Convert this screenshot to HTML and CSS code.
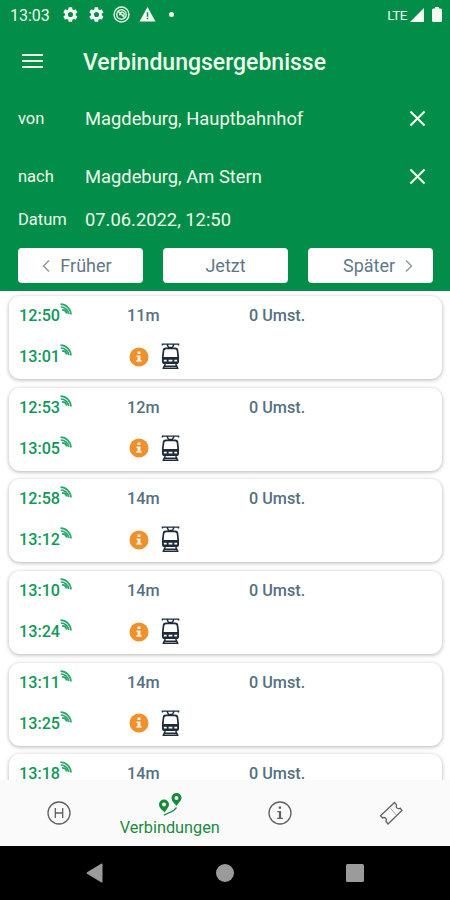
FILE: index.html
```
<!DOCTYPE html>
<html lang="de">
<head>
    <meta charset="utf-8">
    <title>Verbindungsergebnisse</title>
    <link rel="stylesheet" href="styles.css">
</head>
<body>
    <!-- icons used more than once -->
    <svg class="sprite">
        <symbol id="gear" viewBox="0 0 24 24">
            <path fill-rule="evenodd" d="M19.4 13a7.500 7.500 0 0 0 0-2l2.200-1.700a.5.5 0 0 0 .1-.6l-2.200-3.700a.5.5 0 0 0-.6-.2l-2.500 1a7.300 7.300 0 0 0-1.700-1l-.4-2.700a.5.5 0 0 0-.5-.4h-4a.5.5 0 0 0-.5.4l-.4 2.700a7.300 7.300 0 0 0-1.700 1l-2.500-1a.5.5 0 0 0-.6.2L2 8.700a.5.5 0 0 0 .1.600L4.300 11a7.500 7.500 0 0 0 0 2l-2.200 1.700a.5.5 0 0 0-.1.600l2.100 3.700a.5.5 0 0 0 .6.200l2.500-1a7.300 7.300 0 0 0 1.700 1l.4 2.700a.5.5 0 0 0 .5.400h4a.5.5 0 0 0 .5-.4l.4-2.700a7.300 7.300 0 0 0 1.700-1l2.500 1a.5.5 0 0 0 .6-.2l2.100-3.700a.5.5 0 0 0-.1-.6zM12 15.600a3.600 3.600 0 1 1 0-7.200 3.600 3.600 0 0 1 0 7.200z"/>
        </symbol>
        <symbol id="close" viewBox="0 0 18 18">
            <path d="M1.500 1.500l15 15M16.500 1.500l-15 15"/>
        </symbol>
        <symbol id="live" viewBox="0 0 12 12">
            <path d="M.5 1.200C6 1.200 10.600 5.500 11 11.500M.8 4C5 4 8.400 7.300 8.700 11M2 6.800c2.400 0 4.300 1.700 4.600 3.700"/>
        </symbol>
        <symbol id="info" viewBox="0 0 20 20">
            <circle cx="10" cy="10" r="9.500" fill="#ee902c"/>
            <path fill="#fdeedd" d="M8.500 4.600h3v2.500h-3zM7.500 8.400h4v4.800h1.200v1.600H7.300v-1.600h1.200V10h-1z"/>
        </symbol>
        <symbol id="tram" viewBox="0 0 20 28">
            <path fill="none" stroke="#1d2b3a" stroke-width="1.500" d="M1.500 2.300V1h17v1.300M6.500 1.500l1.500 3h4l1.500-3"/>
            <path fill="#1d2b3a" fill-rule="evenodd" d="M5 4.500h10q3 0 3.200 3L19 14v5q0 3-3 3H4q-3 0-3-3v-5l.8-6.500q.2-3 3.200-3zM5.500 6.300q-1.800 0-2 1.700l-.7 6.500h14.400L16.500 8q-.2-1.700-2-1.700zM3 17.300v2h3v-2zM14 17.300v2h3v-2zM8 17.500v1.800h4v-1.800z"/>
            <path fill="none" stroke="#1d2b3a" stroke-width="1.500" d="M4.500 22L2 27M15.500 22l2.500 5M3.500 24.200h13M2.500 26.300h15"/>
        </symbol>
    </svg>

    <div class="screen">
        <header class="header">
            <div class="status">
                <span class="clock">13:03</span>
                <svg class="status-icon"><use href="#gear"/></svg>
                <svg class="status-icon"><use href="#gear"/></svg>
                <svg class="status-icon ring" viewBox="0 0 18 18">
                    <circle cx="9" cy="9" r="7.900"/>
                    <circle cx="9" cy="9" r="5"/>
                    <path d="M5 5l8 8M7.500 9.800a2.300 2.300 0 1 1 3 1"/>
                </svg>
                <svg class="status-icon" viewBox="0 0 18 18">
                    <path fill-rule="evenodd" d="M9 1L17.500 16.500H.5zM8.200 6.500v4.800h1.600V6.500zM8.200 12.500V14h1.600v-1.500z"/>
                </svg>
                <span class="dot"></span>
                <span class="lte">LTE</span>
                <svg class="signal" viewBox="0 0 14 14"><path d="M14 0v14H0z"/></svg>
                <svg class="battery" viewBox="0 0 10 15"><path d="M3 0h4v1.500h1.500Q10 1.500 10 3v10.500q0 1.500-1.500 1.500h-7Q0 15 0 13.500V3q0-1.500 1.500-1.500H3z"/></svg>
            </div>

            <div class="title-row">
                <div class="menu"><i></i><i></i><i></i></div>
                <h1>Verbindungsergebnisse</h1>
            </div>

            <div class="field from">
                <label>von</label>
                <span class="value">Magdeburg, Hauptbahnhof</span>
                <svg class="close"><use href="#close"/></svg>
            </div>
            <div class="field to">
                <label>nach</label>
                <span class="value">Magdeburg, Am Stern</span>
                <svg class="close"><use href="#close"/></svg>
            </div>
            <div class="field date">
                <label>Datum</label>
                <span class="value">07.06.2022, 12:50</span>
            </div>

            <div class="buttons">
                <button class="earlier"><svg class="chevron" viewBox="0 0 8 12"><path d="M7 .5L1.500 6 7 11.500"/></svg><span>Früher</span></button>
                <button><span>Jetzt</span></button>
                <button class="later"><span>Später</span><svg class="chevron" viewBox="0 0 8 12"><path d="M1 .5L6.500 6 1 11.500"/></svg></button>
            </div>
        </header>

        <main class="results">
            <div class="card">
                <div class="time">12:50<svg class="live"><use href="#live"/></svg></div>
                <div class="duration">11m</div>
                <div class="changes">0 Umst.</div>
                <div class="time">13:01<svg class="live"><use href="#live"/></svg></div>
                <div class="lines"><svg class="info"><use href="#info"/></svg><svg class="tram"><use href="#tram"/></svg></div>
            </div>
            <div class="card">
                <div class="time">12:53<svg class="live"><use href="#live"/></svg></div>
                <div class="duration">12m</div>
                <div class="changes">0 Umst.</div>
                <div class="time">13:05<svg class="live"><use href="#live"/></svg></div>
                <div class="lines"><svg class="info"><use href="#info"/></svg><svg class="tram"><use href="#tram"/></svg></div>
            </div>
            <div class="card">
                <div class="time">12:58<svg class="live"><use href="#live"/></svg></div>
                <div class="duration">14m</div>
                <div class="changes">0 Umst.</div>
                <div class="time">13:12<svg class="live"><use href="#live"/></svg></div>
                <div class="lines"><svg class="info"><use href="#info"/></svg><svg class="tram"><use href="#tram"/></svg></div>
            </div>
            <div class="card">
                <div class="time">13:10<svg class="live"><use href="#live"/></svg></div>
                <div class="duration">14m</div>
                <div class="changes">0 Umst.</div>
                <div class="time">13:24<svg class="live"><use href="#live"/></svg></div>
                <div class="lines"><svg class="info"><use href="#info"/></svg><svg class="tram"><use href="#tram"/></svg></div>
            </div>
            <div class="card">
                <div class="time">13:11<svg class="live"><use href="#live"/></svg></div>
                <div class="duration">14m</div>
                <div class="changes">0 Umst.</div>
                <div class="time">13:25<svg class="live"><use href="#live"/></svg></div>
                <div class="lines"><svg class="info"><use href="#info"/></svg><svg class="tram"><use href="#tram"/></svg></div>
            </div>
            <div class="card">
                <div class="time">13:18<svg class="live"><use href="#live"/></svg></div>
                <div class="duration">14m</div>
                <div class="changes">0 Umst.</div>
            </div>
        </main>

        <nav class="tabs">
            <a class="tab">
                <svg class="tab-icon" viewBox="0 0 24 24">
                    <circle cx="12" cy="12" r="11"/>
                    <path d="M8.300 7v10M15.700 7v10M8.300 12h7.400"/>
                </svg>
            </a>
            <a class="tab active">
                <svg class="route" viewBox="0 0 24 24">
                    <path fill-rule="evenodd" d="M6 7.500a5 5 0 0 1 5 5c0 3-3 5-4.300 8C4 18 1 15.500 1 12.500a5 5 0 0 1 5-5zm0 3a2 2 0 1 0 0 4 2 2 0 0 0 0-4zM18.500 1a5 5 0 0 1 5 5c0 3-3.500 5-5 8-2-2.500-5-5-5-8a5 5 0 0 1 5-5zm0 3a2 2 0 1 0 0 4 2 2 0 0 0 0-4z"/>
                    <path class="road" d="M6 23.200l3.500-1.700 3.500-1.700 3-1.600 2.500-2.700"/>
                </svg>
                <span>Verbindungen</span>
            </a>
            <a class="tab">
                <svg class="tab-icon" viewBox="0 0 24 24">
                    <circle cx="12" cy="12" r="11"/>
                    <path class="solid" d="M10.700 5.500h2.400v2.300h-2.400zM9.300 10h3.800v6.800h1.800V18H9.200v-1.200h1.700v-5.600H9.300z"/>
                </svg>
            </a>
            <a class="tab">
                <svg class="tab-icon ticket" viewBox="0 0 24 24">
                    <path d="M15.500 1.500l2 2.300q-.8 2 .5 3.200 1.500 1.200 3.200.2l1.800 2.300L9 23l-2-2.500q1-2-.3-3.300-1.500-1.300-3.200-.2L1.500 14.800z"/>
                    <path class="tear" d="M11.500 7.500l6 6.500"/>
                </svg>
            </a>
        </nav>

        <footer class="android-nav">
            <svg viewBox="0 0 20 20"><path d="M17.500 1v18q-.3.700-1 .4L2 10.700q-1-.7 0-1.400L16.500.6q.7-.3 1 .4z"/></svg>
            <svg viewBox="0 0 20 20"><circle cx="10" cy="10" r="9"/></svg>
            <svg viewBox="0 0 20 20"><rect x="1" y="1" width="18" height="18" rx="1.500"/></svg>
        </footer>
    </div>
</body>
</html>
```
FILE: styles.css
```
* {
    box-sizing: border-box;
}

body {
    margin: 0;
    font-family: Roboto, "Liberation Sans", sans-serif;
    background: #fff;
}

svg {
    display: block;
    flex: none;
}

.sprite {
    display: none;
}

.screen {
    display: flex;
    flex-direction: column;
    width: 450px;
    height: 900px;
    overflow: hidden;
}

/* green header */
.header {
    flex: none;
    height: 291px;
    background: #028e49;
    color: #eefbe9;
}

.status {
    display: flex;
    align-items: center;
    height: 29px;
    padding: 0 8px 0 10px;
    fill: #f3fdf1;
}

.clock {
    width: 52px;
    padding-top: 1px;
    font-size: 16px;
}

.status-icon {
    width: 17px;
    height: 17px;
    margin-right: 8.500px;
}

.ring {
    fill: none;
    stroke: #e8f8e5;
    stroke-width: 1.500;
}

.dot {
    width: 5px;
    height: 5px;
    margin-left: 5px;
    border-radius: 50%;
    background: #f3fdf1;
}

.lte {
    margin-left: auto;
    font-size: 13.500px;
    letter-spacing: -.5px;
}

.signal {
    width: 14px;
    height: 14px;
    margin: 0 8px 0 3px;
}

.battery {
    width: 10px;
    height: 15px;
}

.title-row {
    display: flex;
    align-items: center;
    height: 66px;
    padding-left: 22px;
}

.menu {
    display: flex;
    flex-direction: column;
    gap: 4px;
    width: 61px;
    margin-top: -3px;
}

.menu i {
    width: 21px;
    height: 2px;
    background: #eefbe9;
}

h1 {
    margin: 0;
    font-size: 23px;
    font-weight: 500;
}

.field {
    display: flex;
    align-items: center;
    padding: 0 24px 0 18px;
}

.field label {
    width: 67px;
    font-size: 16.500px;
}

.value {
    font-size: 18.350px;
}

.from {
    height: 47px;
}

.to {
    height: 69px;
}

.date {
    height: 16px;
}

.close {
    width: 17px;
    height: 17px;
    margin-left: auto;
    fill: none;
    stroke: #f3fdf1;
    stroke-width: 2.200;
}

.buttons {
    display: grid;
    grid-template-columns: repeat(3, 125px);
    justify-content: space-between;
    padding: 21px 17px 0 18px;
}

button {
    display: flex;
    align-items: center;
    justify-content: center;
    gap: 10px;
    height: 35px;
    padding: 0;
    border: 0;
    border-radius: 4px;
    background: #fff;
    color: #627887;
    font: 18px Roboto, "Liberation Sans", sans-serif;
}

.earlier {
    padding-right: 7px;
}

.later {
    padding-left: 15px;
}

.chevron {
    width: 8px;
    height: 12px;
    fill: none;
    stroke: #8e9ba5;
    stroke-width: 1.500;
}

/* connection list */
.results {
    display: flex;
    flex: 1;
    flex-direction: column;
    gap: 8.700px;
    min-height: 0;
    padding: 5px 8px 0 9px;
    overflow: hidden;
}

.card {
    display: grid;
    flex: none;
    grid-template-columns: 108px 122px 1fr;
    grid-template-rows: 41px 41px;
    align-items: center;
    height: 83px;
    padding-left: 10px;
    border-radius: 11px;
    background: #fff;
    box-shadow: 0 1px 4px rgba(0, 0, 0, .3);
    color: #557080;
    font-size: 16.200px;
    font-weight: 500;
    line-height: 19px;
}

.card > div {
    margin-top: -2px;
}

.time {
    display: flex;
    color: #10985a;
}

.live {
    width: 12px;
    height: 12px;
    margin-top: -3px;
    fill: none;
    stroke: #2ba56c;
    stroke-width: 1.700;
}

.lines {
    display: flex;
    align-items: center;
    gap: 12px;
    padding-left: 2px;
}

.info {
    width: 20px;
    height: 20px;
}

.tram {
    width: 19px;
    height: 27px;
}

/* bottom tabs */
.tabs {
    display: grid;
    flex: none;
    grid-template-columns: repeat(4, 110.500px);
    justify-content: center;
    height: 66px;
    background: #fafafa;
}

.tab {
    display: flex;
    flex-direction: column;
    align-items: center;
    justify-content: center;
    gap: 2px;
    color: #1d8a3f;
    font-size: 16.300px;
}

.active {
    padding-top: 2px;
}

.tab-icon {
    width: 24px;
    height: 24px;
    fill: none;
    stroke: #606060;
    stroke-width: 1.300;
}

.tab-icon .solid {
    fill: #606060;
    stroke: none;
}

.ticket .tear {
    stroke: #aaa;
    stroke-width: 1;
}

.route {
    width: 24px;
    height: 24px;
    fill: #118c38;
}

.route .road {
    fill: none;
    stroke: #118c38;
    stroke-width: 1.300;
}

.android-nav {
    display: flex;
    flex: none;
    align-items: center;
    justify-content: space-between;
    height: 54px;
    padding: 0 85px;
    background: #000;
    fill: #9b9b9b;
}

.android-nav svg {
    width: 20px;
    height: 20px;
}
```
